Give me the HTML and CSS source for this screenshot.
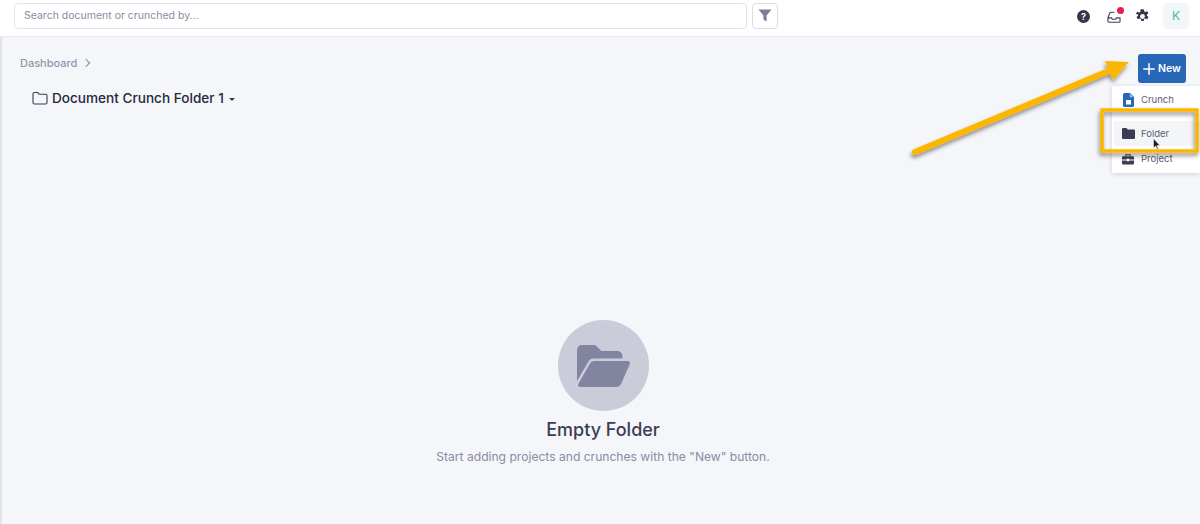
FILE: index.html
```html
<!DOCTYPE html>
<html lang="en">
<head>
    <meta charset="UTF-8">
    <title>Document Crunch Folder 1</title>
    <link rel="stylesheet" href="styles.css">
</head>
<body>
    <header class="topbar">
        <div class="search">Search document or crunched by...</div>
        <button class="filter-btn">
            <svg width="14" height="13" viewBox="0 0 14 13"><path d="M0.5 0.5h13L8.6 6.6V12.6L5.4 10.4V6.6z" fill="#7b7d9a"/></svg>
        </button>
        <div class="top-icons">
            <span class="help">?</span>
            <span class="inbox">
                <svg width="14" height="13" viewBox="0 0 15 14" fill="none" stroke="#3b3d55" stroke-width="1.2"><path d="M1 8.5V12a1.2 1.2 0 0 0 1.2 1.2h10.600A1.2 1.2 0 0 0 14 12V8.500H10.200L9.300 10H5.700L4.800 8.500H1L3 3.200A1.200 1.200 0 0 1 4.100 2.400H8"/></svg>
                <span class="dot"></span>
            </span>
            <svg class="gear" width="15" height="15" viewBox="1 1.500 22 23"><path fill="#34364e" fill-rule="evenodd" d="M13.900 1l.5 3.100c.7.2 1.300.5 1.900.9l2.900-1.200 2 3.400-2.500 1.900c.1.300.1.600.1.900s0 .600-.1.900l2.500 1.900-2 3.400-2.900-1.200c-.6.400-1.200.7-1.900.9l-.5 3.100h-3.800l-.5-3.100c-.7-.2-1.300-.5-1.900-.9l-2.900 1.200-2-3.400 2.500-1.900c-.1-.3-.1-.6-.1-.9s0-.6.1-.9L1.800 8.100l2-3.400 2.900 1.200c.6-.4 1.200-.7 1.900-.9L9.100 1zM12 8.300a3.700 3.700 0 1 0 0 7.400 3.700 3.700 0 0 0 0-7.400z" transform="translate(0 1)"/></svg>
            <span class="avatar">K</span>
        </div>
    </header>

    <main class="content">
        <div class="head-row">
            <div>
                <div class="crumbs">Dashboard <span class="crumb-sep"></span></div>
                <h1 class="folder-title">
                    <svg width="16" height="14" viewBox="0 0 16 14" fill="none" stroke="#3b3d55" stroke-width="1.1"><path d="M1 3a1.500 1.500 0 0 1 1.500-1.500h3.200L7.300 3.200h6.200A1.500 1.500 0 0 1 15 4.700v6.800A1.500 1.500 0 0 1 13.500 13h-11A1.500 1.500 0 0 1 1 11.500z"/></svg>
                    Document Crunch Folder 1
                    <span class="caret"></span>
                </h1>
            </div>
            <button class="new-btn">
                <svg width="12" height="12" viewBox="0 0 12 12" stroke="#fff" stroke-width="1.500" stroke-linecap="round"><path d="M6 .8v10.400M.8 6h10.400"/></svg>
                New
            </button>
        </div>

        <div class="empty">
            <div class="empty-circle">
                <svg width="53" height="42" viewBox="0 0 53 42"><path fill="#8385a0" d="M0 5a5 5 0 0 1 5-5h11c2 0 3 .6 4.400 2l4 4h16a5 5 0 0 1 5 5v2.500H17c-3 0-4.500 1.100-5.800 3.400L0 36z"/><path fill="#8385a0" d="M17.500 16H50.500c2 0 3 1.500 2.200 3.300L44.500 38c-1 2.500-3 4-5.500 4H3.500c-2 0-3-1.700-2-3.500L13 18.500c1-1.700 2.500-2.500 4.500-2.500z"/></svg>
            </div>
            <h2 class="empty-title">Empty Folder</h2>
            <p class="empty-text">Start adding projects and crunches with the "New" button.</p>
        </div>
    </main>

    <div class="new-menu">
        <div class="menu-item crunch">
            <svg width="11" height="14" viewBox="0 0 11 14"><path fill="#2767b8" d="M1.500 0H7l4 4v8.500A1.500 1.500 0 0 1 9.500 14h-8A1.500 1.500 0 0 1 0 12.500v-11A1.500 1.500 0 0 1 1.500 0z"/><path fill="#fff" d="M3 7h5v4.500H3z"/><path fill="#a9c4e8" d="M6.800 .8v3.400h3.400z"/></svg>
            Crunch
        </div>
        <div class="menu-item active">
            <svg width="13" height="11" viewBox="0 0 13 11"><path fill="#3b3d55" d="M0 1.200A1.200 1.200 0 0 1 1.200 0h3.300l1.300 1.500h6A1.200 1.200 0 0 1 13 2.700v7.100A1.200 1.200 0 0 1 11.800 11H1.200A1.200 1.200 0 0 1 0 9.800z"/></svg>
            Folder
        </div>
        <div class="menu-item">
            <svg width="12" height="12" viewBox="0 0 13 12"><path fill="none" stroke="#3b3d55" stroke-width="1.300" d="M4.200 3V1.400h4.600V3"/><path fill="#3b3d55" d="M1 3h11a1 1 0 0 1 1 1v2.500H8v-.8H5v.8H0V4a1 1 0 0 1 1-1zM0 7.500h5v1h3v-1h5V11a1 1 0 0 1-1 1H1a1 1 0 0 1-1-1z"/></svg>
            Project
        </div>
    </div>

    <!-- annotation drawn over the screenshot -->
    <svg class="annotation" width="1200" height="524" viewBox="0 0 1200 524">
        <defs>
            <filter id="arrowShadow" x="-10%" y="-10%" width="120%" height="130%">
                <feDropShadow dx="-1" dy="3" stdDeviation="2" flood-color="#000" flood-opacity="0.45"/>
            </filter>
        </defs>
        <g filter="url(#arrowShadow)">
            <path d="M915 152L1112 69.500" stroke="#fdb600" stroke-width="6" stroke-linecap="round" fill="none"/>
            <path d="M1105 61L1129 62L1113 80z" fill="#fdb600"/>
            <rect x="1102" y="110" width="95" height="41" fill="none" stroke="#fdb600" stroke-width="3.500"/>
        </g>
        <path d="M1153.500 138.500v9.500l2.200-2 1.500 3.200 1.100-.5-1.400-3.100h3z" fill="#1c1c1c" stroke="#fff" stroke-width=".5"/>
    </svg>
</body>
</html>
```

FILE: styles.css
```css
* {
    box-sizing: border-box;
}

body {
    margin: 0;
    height: 524px;
    overflow: hidden;
    display: flex;
    flex-direction: column;
    background-color: #f4f6f9;
    font-family: 'Inter', 'Noto Sans', sans-serif;
    color: #3b3d55;
}

.topbar {
    height: 37px;
    flex-shrink: 0;
    display: flex;
    align-items: flex-start;
    padding: 3px 11px 0 14px;
    background-color: #fff;
    border-bottom: 1px solid #e9eaee;
}

.search {
    width: 733px;
    height: 26px;
    padding-left: 9px;
    border: 1px solid #e3e4ea;
    border-radius: 4px;
    font-size: 10.500px;
    line-height: 24px;
    color: #8a8ca4;
}

.filter-btn {
    width: 26px;
    height: 26px;
    margin-left: 5px;
    padding: 2px 0 0;
    background: #fff;
    border: 1px solid #dcdde3;
    border-radius: 4px;
}

.top-icons {
    margin-left: auto;
    display: flex;
    align-items: center;
    height: 26px;
}

.help {
    width: 13px;
    height: 13px;
    border-radius: 50%;
    background-color: #34364e;
    color: #fff;
    font-size: 9px;
    font-weight: 700;
    line-height: 13px;
    text-align: center;
}

.inbox {
    position: relative;
    display: flex;
    margin-left: 17px;
}

.dot {
    position: absolute;
    top: -3px;
    right: -3px;
    width: 7px;
    height: 7px;
    border-radius: 50%;
    background-color: #ea1c4e;
}

.gear {
    margin-left: 14px;
}

.avatar {
    width: 26px;
    height: 26px;
    margin-left: 13px;
    border-radius: 4px;
    background-color: #f1f6fb;
    color: #4fb892;
    font-size: 12px;
    line-height: 26px;
    text-align: center;
}

.content {
    flex: 1;
    display: flex;
    flex-direction: column;
    padding: 16px 14px 0 18px;
    border-left: 2px solid #e3e4e9;
}

.head-row {
    display: flex;
    justify-content: space-between;
    align-items: flex-start;
}

.crumbs {
    display: flex;
    align-items: center;
    height: 20px;
    font-size: 11px;
    font-weight: 500;
    color: #9395ab;
}

.crumb-sep {
    width: 6px;
    height: 6px;
    margin-left: 6px;
    border-top: 1px solid #8a8ca4;
    border-right: 1px solid #8a8ca4;
    transform: rotate(45deg);
}

.folder-title {
    display: flex;
    align-items: center;
    gap: 5px;
    height: 24px;
    margin: 13px 0 0 12px;
    font-size: 13.600px;
    font-weight: 500;
    color: #26283c;
    white-space: nowrap;
}

.folder-title svg {
    margin-right: -1px;
}

.caret {
    margin-top: 2px;
    border: 3.500px solid transparent;
    border-top: 3.500px solid #3b3d55;
    border-bottom: none;
}

.new-btn {
    width: 48px;
    height: 29px;
    margin-top: 1px;
    padding: 0;
    display: flex;
    align-items: center;
    justify-content: center;
    gap: 3px;
    background-color: #2767b8;
    color: #fff;
    border: none;
    border-radius: 3px;
    font-family: inherit;
    font-size: 10.500px;
    font-weight: 600;
}

.empty {
    display: flex;
    flex-direction: column;
    align-items: center;
    margin-top: 210px;
}

.empty-circle {
    width: 91px;
    height: 91px;
    display: flex;
    align-items: center;
    justify-content: center;
    padding-left: 1px;
    border-radius: 50%;
    background-color: #cbccd9;
}

.empty-title {
    margin: 8px 0 0;
    font-size: 18px;
    font-weight: 500;
    line-height: 21px;
    color: #3b3d55;
}

.empty-text {
    margin: 9px 0 0;
    font-size: 12.100px;
    line-height: 15px;
    color: #8a8ca4;
}

.new-menu {
    position: absolute;
    top: 86px;
    left: 1112px;
    width: 88px;
    height: 87px;
    padding-top: 1px;
    background-color: #fff;
    box-shadow: 0 1px 4px rgba(40, 42, 70, 0.18);
}

.menu-item {
    display: flex;
    align-items: center;
    gap: 7px;
    height: 25px;
    padding-left: 10px;
    font-size: 9.500px;
    color: #5a5c72;
}

.menu-item.crunch {
    padding-left: 11px;
}

.menu-item.active {
    gap: 6px;
    margin: 9px 0 0 2px;
    padding-left: 8px;
    background-color: #f3f5f8;
}

.annotation {
    position: absolute;
    top: 0;
    left: 0;
    pointer-events: none;
}
```
